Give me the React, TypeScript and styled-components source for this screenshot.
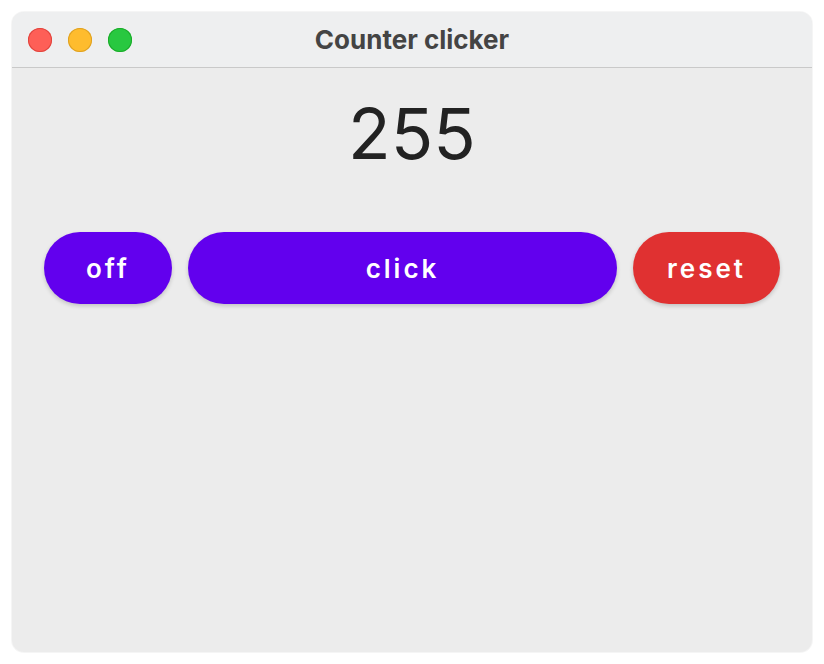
import React, { useState } from 'react'
import styled, { createGlobalStyle } from 'styled-components'

const GlobalStyle = createGlobalStyle`
  html, body {
    margin: 0;
    padding: 0;
    background: #ffffff;
  }
  body {
    font-family: Inter, 'Liberation Sans', sans-serif;
  }
`

const Page = styled.div`
  width: 824px;
  height: 664px;
  padding: 12px;
  box-sizing: border-box;
`

const Window = styled.div`
  width: 800px;
  height: 640px;
  border-radius: 12px;
  overflow: hidden;
  background: #ececec;
  display: flex;
  flex-direction: column;
  box-shadow: 0 0 0 1px rgba(0, 0, 0, 0.04);
`

const TitleBar = styled.div`
  height: 55px;
  flex-shrink: 0;
  background: #eeeff0;
  border-bottom: 1px solid #c9c9c9;
  display: flex;
  align-items: center;
  position: relative;
  padding-left: 16px;
`

const Lights = styled.div`
  display: flex;
  gap: 16px;
`

const Light = styled.span<{ $color: string; $edge: string }>`
  width: 24px;
  height: 24px;
  border-radius: 50%;
  background: ${p => p.$color};
  box-shadow: inset 0 0 0 1px ${p => p.$edge};
`

const Title = styled.div`
  position: absolute;
  left: 0;
  right: 0;
  top: 0;
  bottom: 0;
  display: flex;
  align-items: center;
  justify-content: center;
  font-family: Inter, 'Liberation Sans', sans-serif;
  font-weight: 700;
  font-size: 26px;
  color: #444444;
  pointer-events: none;
`

const Content = styled.div`
  display: flex;
  flex-direction: column;
  align-items: center;
  padding: 0 32px;
`

const Count = styled.div`
  margin-top: 25px;
  font-size: 70px;
  line-height: 82px;
  color: #222222;
  font-family: Inter, 'Liberation Sans', sans-serif;
`

const Row = styled.div`
  margin-top: 57px;
  width: 100%;
  display: flex;
  gap: 16px;
`

const Button = styled.button<{ $bg: string; $grow?: boolean }>`
  height: 72px;
  min-width: 128px;
  padding: 0 34px;
  border: none;
  border-radius: 36px;
  background: ${p => p.$bg};
  color: #ffffff;
  font-family: Inter, 'Liberation Sans', sans-serif;
  font-weight: 600;
  font-size: 26px;
  letter-spacing: 3px;
  cursor: pointer;
  flex: ${p => (p.$grow ? 1 : '0 0 auto')};
  box-shadow: 0 2px 4px rgba(0, 0, 0, 0.18);
`

export default function App() {
  const [count, setCount] = useState(255)
  const [on, setOn] = useState(false)

  return (
    <>
      <GlobalStyle />
      <Page>
        <Window>
          <TitleBar>
            <Lights>
              <Light $color="#fe5f57" $edge="#e0443e" />
              <Light $color="#febc2e" $edge="#dea123" />
              <Light $color="#28c840" $edge="#1aab29" />
            </Lights>
            <Title>Counter clicker</Title>
          </TitleBar>
          <Content>
            <Count>{count}</Count>
            <Row>
              <Button $bg="#6200ee" onClick={() => setOn(!on)}>
                {on ? 'on' : 'off'}
              </Button>
              <Button $bg="#6200ee" $grow onClick={() => setCount(count + 1)}>
                click
              </Button>
              <Button $bg="#e03131" onClick={() => setCount(0)}>
                reset
              </Button>
            </Row>
          </Content>
        </Window>
      </Page>
    </>
  )
}
